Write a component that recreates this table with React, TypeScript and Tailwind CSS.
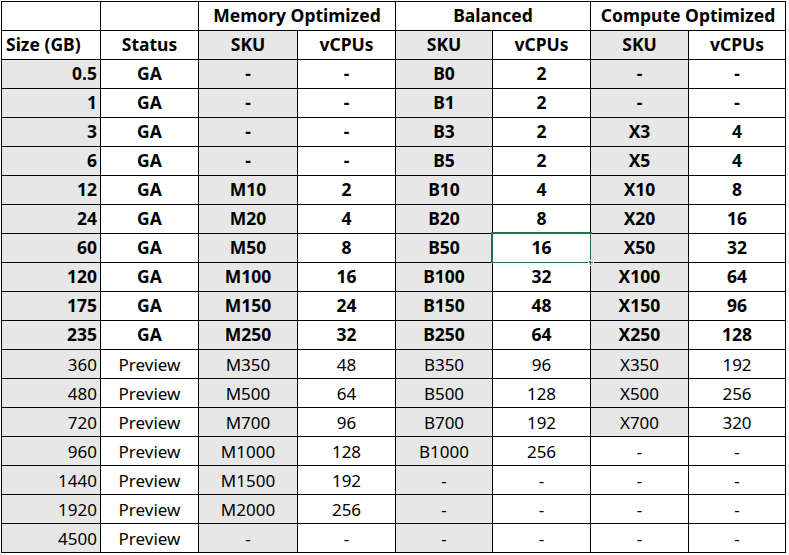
const rows: string[][] = [
  ['0.5', 'GA', '-', '-', 'B0', '2', '-', '-'],
  ['1', 'GA', '-', '-', 'B1', '2', '-', '-'],
  ['3', 'GA', '-', '-', 'B3', '2', 'X3', '4'],
  ['6', 'GA', '-', '-', 'B5', '2', 'X5', '4'],
  ['12', 'GA', 'M10', '2', 'B10', '4', 'X10', '8'],
  ['24', 'GA', 'M20', '4', 'B20', '8', 'X20', '16'],
  ['60', 'GA', 'M50', '8', 'B50', '16', 'X50', '32'],
  ['120', 'GA', 'M100', '16', 'B100', '32', 'X100', '64'],
  ['175', 'GA', 'M150', '24', 'B150', '48', 'X150', '96'],
  ['235', 'GA', 'M250', '32', 'B250', '64', 'X250', '128'],
  ['360', 'Preview', 'M350', '48', 'B350', '96', 'X350', '192'],
  ['480', 'Preview', 'M500', '64', 'B500', '128', 'X500', '256'],
  ['720', 'Preview', 'M700', '96', 'B700', '192', 'X700', '320'],
  ['960', 'Preview', 'M1000', '128', 'B1000', '256', '-', '-'],
  ['1440', 'Preview', 'M1500', '192', '-', '-', '-', '-'],
  ['1920', 'Preview', 'M2000', '256', '-', '-', '-', '-'],
  ['4500', 'Preview', '-', '-', '-', '-', '-', '-'],
];

// which cells get the grey fill (Excel style shading)
function isShaded(rowIdx: number, col: number) {
  if (col === 0 || col === 2 || col === 4) return true;
  if (col === 6) return rowIdx <= 12;
  return false;
}

const head = 'flex items-center justify-center bg-white text-[17.5px] font-bold';
const headGrey = 'flex items-center justify-center bg-[#e7e7e7] text-[17.5px] font-bold';

export default function App() {
  return (
    <div className="min-h-[555px] bg-white pl-px pt-px leading-none text-black [font-family:'Noto_Sans','Open_Sans',sans-serif]">
      <div className="grid w-fit grid-cols-[98px_97px_98px_97px_96px_97px_97px_96px] auto-rows-[28px] gap-px bg-black p-px">
        {/* group header row */}
        <div className="bg-white" />
        <div className="bg-white" />
        <div className={`col-span-2 ${head}`}>Memory Optimized</div>
        <div className={`col-span-2 ${head}`}>Balanced</div>
        <div className={`col-span-2 ${head}`}>Compute Optimized</div>

        {/* column header row */}
        <div className="flex items-center bg-white pl-[4px] text-[17.5px] font-bold">Size (GB)</div>
        <div className={head}>Status</div>
        <div className={headGrey}>SKU</div>
        <div className={head}>vCPUs</div>
        <div className={headGrey}>SKU</div>
        <div className={head}>vCPUs</div>
        <div className={headGrey}>SKU</div>
        <div className={head}>vCPUs</div>

        {rows.map((row, r) =>
          row.map((val, c) => {
            const bold = row[1] === 'GA';
            const selected = r === 6 && c === 5;
            return (
              <div
                key={`${r}-${c}`}
                className={[
                  'relative flex items-center',
                  c === 0 ? 'justify-end pr-[3px]' : 'justify-center',
                  isShaded(r, c) ? 'bg-[#e7e7e7]' : 'bg-white',
                  bold ? 'text-[17.5px] font-bold' : 'text-[17px] font-normal',
                ].join(' ')}
              >
                {val}
                {selected && (
                  <>
                    <div className="pointer-events-none absolute -inset-[2px] border-2 border-[#217346]" />
                    <div className="absolute -bottom-[4px] -right-[4px] h-[6px] w-[6px] border border-white bg-[#217346]" />
                  </>
                )}
              </div>
            );
          })
        )}
      </div>
    </div>
  );
}
